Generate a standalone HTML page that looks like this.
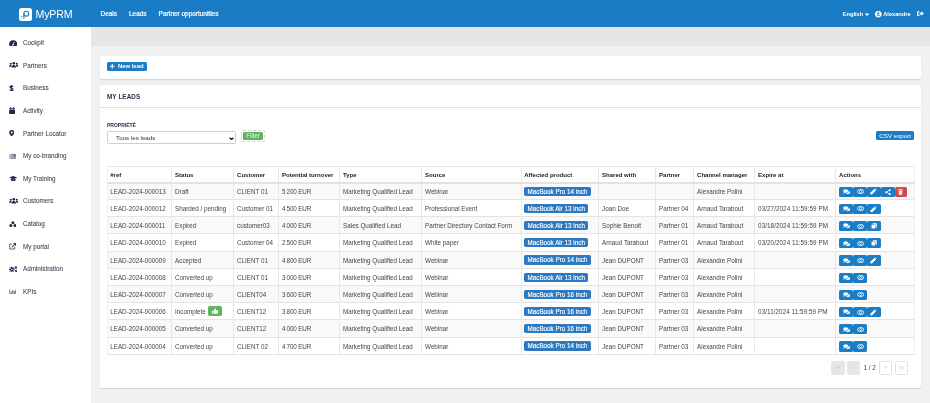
<!DOCTYPE html>
<html><head><meta charset="utf-8">
<style>
*{box-sizing:border-box;margin:0;padding:0}
html,body{width:930px;height:403px;overflow:hidden}
body{background:#f1f1f1;font-family:"Liberation Sans",sans-serif;position:relative}
#wrap{position:absolute;left:0;top:0;width:930px;height:403px;will-change:transform}
#hdr{position:absolute;left:0;top:0;width:930px;height:27px;background:#1a7cc5}
#logo{position:absolute;left:19px;top:8px;width:13px;height:13px;background:#fff;border-radius:2.5px}
#brand{position:absolute;left:35.6px;top:7.2px;font-size:10.6px;line-height:14px;color:#fff;letter-spacing:-0.2px}
.nav{position:absolute;top:10.2px;font-size:6.45px;line-height:7px;color:#fff;-webkit-text-stroke:0.2px #fff}
#side{position:absolute;left:0;top:27px;width:91px;height:376px;background:#fff}
.si{position:absolute;left:0;height:10px;width:91px}
.sic{position:absolute;left:8.5px;top:0;line-height:0}
.sic svg{display:block}
.stx{position:absolute;left:23px;top:1.3px;font-size:6.3px;line-height:8px;color:#424857;white-space:nowrap;-webkit-text-stroke:0.08px #424857}
#band{position:absolute;left:91px;top:27px;width:839px;height:19px;background:#e6e6e6}
.panel{position:absolute;left:100px;width:821px;background:#fff;border-radius:2px;box-shadow:0 0.5px 1px rgba(0,0,0,0.12)}
#p1{top:55.5px;height:23.5px}
#p2{top:85px;height:303px}
.btnb{position:absolute;background:#1a7dc6;color:#fff;border-radius:1.5px;font-size:5.8px;line-height:9px;white-space:nowrap}
#newlead{left:6.8px;top:6.5px;width:40.7px;height:9px;font-weight:bold;padding-left:11.2px;font-size:5.9px}
#newlead svg{position:absolute;left:3.7px;top:2.3px}
#mylead{position:absolute;left:7px;top:7.5px;font-size:6.3px;line-height:7px;font-weight:bold;color:#2a3246;letter-spacing:0.1px}
#p2line{position:absolute;left:0;top:22px;width:821px;height:1px;background:#e2e2e2}
#prop{position:absolute;left:7px;top:36.8px;font-size:5px;line-height:6px;font-weight:bold;color:#2a3246}
#sel{position:absolute;left:6.6px;top:46.3px;width:129.2px;height:13.2px;border:0.7px solid #cfcfcf;border-radius:1.5px;background:#fff}
#sel span{position:absolute;left:8.5px;top:1.8px;font-size:6.2px;line-height:7px;color:#333}
#sel svg{position:absolute;left:121.7px;top:4.9px}
#filter{position:absolute;left:141px;top:44.5px;width:23.5px;height:12px;border:0.6px dashed #d2d2d2;border-radius:2px}
#filter span{position:absolute;left:0.8px;top:1px;width:20.7px;height:8.5px;background:#5fb35f;color:#e4f2e4;font-size:6.3px;line-height:8.5px;text-align:center;border-radius:1.5px}
#csv{position:absolute;left:775.8px;top:46px;width:38.7px;height:9px;background:#1a7dc6;color:#fff;border-radius:1.5px;font-size:6.2px;line-height:9px;text-align:center}
#tbl{position:absolute;background:#fff}
#tblb{position:absolute;left:0;top:0;right:0;bottom:0;border:0.7px solid #f0f0f0;border-bottom-color:#e2e2e2;border-top-color:#e8e8e8}
.thead{position:absolute;left:0;top:0;width:100%}
.th{position:absolute;top:0;height:100%;padding-left:3.7px;font-size:6px;line-height:18.2px;font-weight:bold;color:#222;white-space:nowrap}
.tr{position:absolute;left:0;width:100%;border-bottom:0.7px solid #e4e4e4}
.tr.odd{background:#f9f9f9}
.td{position:absolute;top:0;height:100%;padding-left:3.7px;font-size:6.28px;line-height:18.4px;color:#40444e;white-space:nowrap}
.vl{position:absolute;top:0;bottom:0;width:0.7px;background:#e8e8e8}
.badge{position:absolute;left:3.5px;top:3.8px;background:#2d79bf;color:#fff;height:9.3px;line-height:9.3px;padding:0 3.4px;border-radius:1.8px;font-size:6.3px;-webkit-text-stroke:0.12px #fff}
.grp{position:absolute;left:3.8px;top:3.9px;display:flex;height:10.2px}
.ab{display:flex;width:13.85px;height:10.2px;background:#1a7dc6;align-items:center;justify-content:center;border-radius:1.6px}
.ab.del{background:#cd4c4a;width:11.2px;margin-left:0.8px}
.ab svg{display:block}
.thumb{position:absolute;left:36.8px;top:3.3px;display:flex;width:13.7px;height:9.4px;background:#5db65d;border-radius:1.8px;align-items:center;justify-content:center}
.pg{position:absolute;width:13.4px;height:13.4px;border:0.6px solid #e2e2e2;border-radius:1.5px;background:#fff;font-size:8px;line-height:11.6px;text-align:center;color:#c4c4c4}
.pg.dis{background:#e6e6e6;border-color:#e6e6e6;color:#c8c8c8}
#pgtxt{position:absolute;left:863.6px;top:364px;font-size:6.3px;line-height:8px;color:#444}
#rt{position:absolute;top:0;left:0}
.rtx{position:absolute;top:11px;font-size:5.7px;line-height:7px;color:#fff;white-space:nowrap;font-weight:bold}
</style></head><body><div id="wrap">
<div id="hdr">
  <div id="logo"><svg viewBox="0 0 26 26" width="13" height="13" style="display:block"><circle cx="14.6" cy="11.4" r="4.9" stroke="#1a7cc5" stroke-width="2.3" fill="none"/><path d="M9.8 11.4V21.5" stroke="#1a7cc5" stroke-width="2.3" fill="none"/><circle cx="5.6" cy="17.4" r="1.3" fill="#1a7cc5"/></svg></div>
  <div id="brand">MyPRM</div>
  <div class="nav" style="left:100.5px">Deals</div>
  <div class="nav" style="left:129px">Leads</div>
  <div class="nav" style="left:158.6px">Partner opportunities</div>
  <div class="rtx" style="left:842.7px">English</div>
  <svg style="position:absolute;left:865.3px;top:13px" width="4" height="2.6" viewBox="0 0 8 5"><path d="M1 1l3 3 3-3" stroke="#fff" stroke-width="2.4" fill="none"/></svg>
  <svg style="position:absolute;left:875px;top:11.2px" width="6.6" height="6.6" viewBox="0 0 12 12"><circle cx="6" cy="6" r="6" fill="#fff"/><circle cx="6" cy="4.5" r="2" fill="#1a7cc5"/><path d="M2.3 9.8c0.8-1.6 2.1-2.4 3.7-2.4s2.9 0.8 3.7 2.4" stroke="#1a7cc5" stroke-width="1.6" fill="none"/></svg>
  <div class="rtx" style="left:883.2px">Alexandre</div>
  <svg style="position:absolute;left:917.2px;top:11.3px" width="7" height="5.1" viewBox="0 0 14 10"><path d="M4.5 1.3H2.6C1.6 1.3 1.2 1.8 1.2 2.8v4.4c0 1 0.4 1.5 1.4 1.5h1.9" stroke="#fff" stroke-width="2.4" fill="none"/><path d="M5.2 3.2h3.6V0.6L13.8 5l-5 4.4V6.8H5.2z" fill="#fff"/></svg>
</div>
<div id="side"><div class="si" style="top:10.65px"><span class="sic" style="top:1.97px"><svg viewBox="0 0 15 11" width="8.4" height="6.16"><path d="M7.5 0.3A7.2 7.2 0 0 0 0.3 7.5c0 1.3 0.3 2.4 0.9 3.3h12.6c0.6-0.9 0.9-2 0.9-3.3A7.2 7.2 0 0 0 7.5 0.3z" fill="#1e2b48"/><path d="M7 9L9.6 3.2" stroke="#fff" stroke-width="1.5"/><circle cx="7" cy="9" r="1.3" fill="#fff"/></svg></span><span class="stx">Cockpit</span></div><div class="si" style="top:33.3px"><span class="sic" style="top:2.2px"><svg viewBox="0 0 17 10" width="9.52" height="5.6"><circle cx="8.5" cy="2.4" r="2.4" fill="#1e2b48"/><circle cx="3" cy="3.2" r="1.8" fill="#1e2b48"/><circle cx="14" cy="3.2" r="1.8" fill="#1e2b48"/><path d="M4.3 10c0-2.7 1.9-4.5 4.2-4.5s4.2 1.8 4.2 4.5z" fill="#1e2b48"/><path d="M0 8.3C0 6.6 1.2 5.5 2.8 5.5c0.9 0 1.6 0.3 2 0.7C4 7 3.6 7.8 3.5 8.3z" fill="#1e2b48"/><path d="M17 8.3c0-1.7-1.2-2.8-2.8-2.8-0.9 0-1.6 0.3-2 0.7 0.8 0.8 1.2 1.6 1.3 2.1z" fill="#1e2b48"/></svg></span><span class="stx">Partners</span></div><div class="si" style="top:55.95px"><span class="sic" style="top:1.64px"><svg viewBox="0 0 9 12" width="5.04" height="6.72"><path d="M7.3 3.3C7 2.4 6 2 4.5 2S1.6 2.6 1.6 3.7s1.3 1.6 2.9 2 3 0.9 3 2.2-1.3 2-3 2-2.8-0.5-3.1-1.5M4.5 0.2v11.6" stroke="#1e2b48" stroke-width="1.9" fill="none"/></svg></span><span class="stx">Business</span></div><div class="si" style="top:78.6px"><span class="sic" style="top:1.62px"><svg viewBox="0 0 12 13" width="6.38" height="7.06"><rect x="0.3" y="2" width="11.4" height="11" rx="1" fill="#1e2b48"/><rect x="2.3" y="0" width="1.8" height="3" fill="#1e2b48"/><rect x="7.9" y="0" width="1.8" height="3" fill="#1e2b48"/><rect x="0.3" y="4.6" width="11.4" height="0.9" fill="#fff"/></svg></span><span class="stx">Activity</span></div><div class="si" style="top:101.25px"><span class="sic" style="top:1.65px"><svg viewBox="0 0 10 12" width="5.49" height="6.5"><path d="M5 0.2A4.8 4.8 0 0 0 0.2 5C0.2 7.8 5 11.8 5 11.8S9.8 7.8 9.8 5A4.8 4.8 0 0 0 5 0.2z" fill="#1e2b48"/><circle cx="5" cy="4.8" r="1.9" fill="#fff"/></svg></span><span class="stx">Partner Locator</span></div><div class="si" style="top:123.9px"><span class="sic" style="top:1.64px"><svg viewBox="0 0 14 12" width="7.84" height="6.72"><path d="M2.5 1.5h11v9h-11z" fill="#7d8596"/><path d="M0.5 3v8.5h11" stroke="#7d8596" stroke-width="1.2" fill="none"/><rect x="4" y="3" width="8" height="6" fill="#aab0bb"/><rect x="8.5" y="4" width="2.5" height="3" fill="#3a4458"/></svg></span><span class="stx">My co-branding</span></div><div class="si" style="top:146.55px"><span class="sic" style="top:2.43px"><svg viewBox="0 0 15 9" width="8.4" height="5.04"><path d="M7.5 0L15 2.8 7.5 5.6 0 2.8z" fill="#1e2b48"/><path d="M3.3 4.5v2.5c0 1 1.9 2 4.2 2s4.2-1 4.2-2V4.5L7.5 6.3z" fill="#1e2b48"/></svg></span><span class="stx">My Training</span></div><div class="si" style="top:169.2px"><span class="sic" style="top:2.2px"><svg viewBox="0 0 17 10" width="9.52" height="5.6"><circle cx="8.5" cy="2.4" r="2.4" fill="#1e2b48"/><circle cx="3" cy="3.2" r="1.8" fill="#1e2b48"/><circle cx="14" cy="3.2" r="1.8" fill="#1e2b48"/><path d="M4.3 10c0-2.7 1.9-4.5 4.2-4.5s4.2 1.8 4.2 4.5z" fill="#1e2b48"/><path d="M0 8.3C0 6.6 1.2 5.5 2.8 5.5c0.9 0 1.6 0.3 2 0.7C4 7 3.6 7.8 3.5 8.3z" fill="#1e2b48"/><path d="M17 8.3c0-1.7-1.2-2.8-2.8-2.8-0.9 0-1.6 0.3-2 0.7 0.8 0.8 1.2 1.6 1.3 2.1z" fill="#1e2b48"/></svg></span><span class="stx">Customers</span></div><div class="si" style="top:191.85px"><span class="sic" style="top:1.87px"><svg viewBox="0 0 14 11" width="7.84" height="6.16"><circle cx="7" cy="3" r="2.7" fill="#1e2b48"/><circle cx="3.3" cy="8" r="2.7" fill="#1e2b48"/><circle cx="10.7" cy="8" r="2.7" fill="#1e2b48"/><circle cx="7" cy="6.3" r="1" fill="#fff"/></svg></span><span class="stx">Catalog</span></div><div class="si" style="top:214.5px"><span class="sic" style="top:1.64px"><svg viewBox="0 0 13 12" width="7.28" height="6.72"><path d="M5 1.8H1.3v9h9V7" stroke="#4a5468" stroke-width="1.6" fill="none"/><path d="M7 0.3h5.4v5.2z" fill="#1e2b48"/><path d="M11.5 1.2L5 7.6" stroke="#1e2b48" stroke-width="1.8"/></svg></span><span class="stx">My portal</span></div><div class="si" style="top:237.15px"><span class="sic" style="top:1.66px"><svg viewBox="0 0 16 11" width="8.96" height="6.27"><circle cx="5" cy="6" r="3.9" fill="none" stroke="#1e2b48" stroke-width="2.4" stroke-dasharray="1.6 0.9"/><circle cx="5" cy="6" r="3" fill="#1e2b48"/><circle cx="5" cy="6" r="1.2" fill="#fff"/><circle cx="12.5" cy="2.6" r="2.3" fill="#1e2b48"/><circle cx="12.5" cy="2.6" r="0.8" fill="#fff"/><circle cx="12.5" cy="8.6" r="2" fill="#1e2b48"/><circle cx="12.5" cy="8.6" r="0.7" fill="#fff"/></svg></span><span class="stx">Administration</span></div><div class="si" style="top:259.8px"><span class="sic" style="top:2.43px"><svg viewBox="0 0 13 9" width="7.28" height="5.04"><path d="M0.7 0v8.3H13" stroke="#6b7486" stroke-width="1.3" fill="none"/><rect x="2.7" y="4" width="2" height="3.8" fill="#6b7486"/><rect x="5.7" y="2" width="2" height="5.8" fill="#6b7486"/><rect x="8.7" y="3.5" width="2" height="4.3" fill="#6b7486"/><rect x="11.2" y="1.2" width="1.6" height="6.6" fill="#6b7486"/></svg></span><span class="stx">KPIs</span></div></div>
<div id="band"></div>
<div class="panel" id="p1">
  <div class="btnb" id="newlead"><svg width="4.6" height="4.6" viewBox="0 0 10 10"><path d="M5 0v10M0 5h10" stroke="#fff" stroke-width="2.2"/></svg>New lead</div>
</div>
<div class="panel" id="p2">
  <div id="mylead">MY LEADS</div>
  <div id="p2line"></div>
  <div id="prop">PROPRIÉTÉ</div>
  <div id="sel"><span>Tous les leads</span><svg width="5" height="3.2" viewBox="0 0 8 5"><path d="M1 1l3 3 3-3" stroke="#1e2b48" stroke-width="2.3" fill="none"/></svg></div>
  <div id="filter"><span>Filter</span></div>
  <div id="csv">CSV export</div>
</div>
<div id="tbl" style="left:106.6px;top:166.1px;width:808px;height:188.7px"><div class="thead" style="height:16.7px"><div class="th" style="left:0px;width:64.8px">#ref</div><div class="th" style="left:64.8px;width:62px">Status</div><div class="th" style="left:126.8px;width:45px">Customer</div><div class="th" style="left:171.8px;width:61px">Potential turnover</div><div class="th" style="left:232.8px;width:82px">Type</div><div class="th" style="left:314.8px;width:99.2px">Source</div><div class="th" style="left:414px;width:77.8px">Affected product</div><div class="th" style="left:491.8px;width:57px">Shared with</div><div class="th" style="left:548.8px;width:38px">Partner</div><div class="th" style="left:586.8px;width:61px">Channel manager</div><div class="th" style="left:647.8px;width:81px">Expire at</div><div class="th" style="left:728.8px;width:79.2px">Actions</div></div><div class="tr odd" style="top:16.7px;height:17.2px"><div class="td" style="left:0px;width:64.8px">LEAD-2024-000013</div><div class="td" style="left:64.8px;width:62px">Draft</div><div class="td" style="left:126.8px;width:45px">CLIENT 01</div><div class="td" style="left:171.8px;width:61px"><span style="letter-spacing:-0.12px">5 200 EUR</span></div><div class="td" style="left:232.8px;width:82px">Marketing Qualified Lead</div><div class="td" style="left:314.8px;width:99.2px">Webinar</div><div class="td" style="left:414px;width:77.8px"><span class="badge">MacBook Pro 14 inch</span></div><div class="td" style="left:491.8px;width:57px"></div><div class="td" style="left:548.8px;width:38px"></div><div class="td" style="left:586.8px;width:61px">Alexandre Polini</div><div class="td" style="left:647.8px;width:81px"></div><div class="td" style="left:728.8px;width:79.2px"><span class="grp"><span class="ab"><svg viewBox="0 0 16 12" width="7.2" height="5.4"><ellipse cx="10.6" cy="7.4" rx="5" ry="3.8" fill="#fff"/><path d="M13.5 9.5l2.4 2.4-4.8-0.8z" fill="#fff"/><ellipse cx="6" cy="4.6" rx="6.4" ry="4.6" fill="#1a7dc6"/><ellipse cx="6" cy="4.6" rx="5.5" ry="3.9" fill="#fff"/><path d="M2 7.4L0.6 10.8 5.5 8.3z" fill="#fff"/></svg></span><span class="ab"><svg viewBox="0 0 16 11" width="7.3" height="5.1" style="margin-left:1px"><ellipse cx="8" cy="5.5" rx="6.8" ry="4.4" fill="none" stroke="#fff" stroke-width="1.9"/><circle cx="8" cy="5.5" r="2.2" fill="none" stroke="#fff" stroke-width="1.5"/></svg></span><span class="ab"><svg viewBox="0 0 12 12" width="6.8" height="6.8"><path d="M0.5 11.5l0.6-3.4L8 1.2l2.8 2.8-6.9 6.9z" fill="#fff"/><path d="M8.8 0.5l0.7-0.4 2.4 2.4-0.4 0.7z" fill="#fff"/></svg></span><span class="ab"><svg viewBox="0 0 12 12" width="6" height="6.4"><path d="M9.3 2.2L2.7 6l6.6 3.8" stroke="#fff" stroke-width="1.4" fill="none"/><circle cx="9.3" cy="2.2" r="2.1" fill="#fff"/><circle cx="2.5" cy="6" r="2.1" fill="#fff"/><circle cx="9.3" cy="9.8" r="2.1" fill="#fff"/></svg></span><span class="ab del"><svg viewBox="0 0 10 12" width="5" height="6"><rect x="0.3" y="1" width="9.4" height="1.6" fill="#fff"/><rect x="3.3" y="0" width="3.4" height="1.5" fill="#fff"/><path d="M1.2 3.3h7.6l-0.6 8.4H1.8z" fill="#fff"/><path d="M3.3 4.5v6M5 4.5v6M6.7 4.5v6" stroke="#e0a09e" stroke-width="0.6"/></svg></span></span></div></div><div class="tr" style="top:33.9px;height:17.2px"><div class="td" style="left:0px;width:64.8px">LEAD-2024-000012</div><div class="td" style="left:64.8px;width:62px">Sharded / pending</div><div class="td" style="left:126.8px;width:45px">Customer 01</div><div class="td" style="left:171.8px;width:61px"><span style="letter-spacing:-0.12px">4 500 EUR</span></div><div class="td" style="left:232.8px;width:82px">Marketing Qualified Lead</div><div class="td" style="left:314.8px;width:99.2px">Professional Event</div><div class="td" style="left:414px;width:77.8px"><span class="badge">MacBook Air 13 inch</span></div><div class="td" style="left:491.8px;width:57px">Joan Doe</div><div class="td" style="left:548.8px;width:38px">Partner 04</div><div class="td" style="left:586.8px;width:61px">Arnaud Tarabout</div><div class="td" style="left:647.8px;width:81px"><span style="letter-spacing:0.08px">03/27/2024 11:59:59 PM</span></div><div class="td" style="left:728.8px;width:79.2px"><span class="grp"><span class="ab"><svg viewBox="0 0 16 12" width="7.2" height="5.4"><ellipse cx="10.6" cy="7.4" rx="5" ry="3.8" fill="#fff"/><path d="M13.5 9.5l2.4 2.4-4.8-0.8z" fill="#fff"/><ellipse cx="6" cy="4.6" rx="6.4" ry="4.6" fill="#1a7dc6"/><ellipse cx="6" cy="4.6" rx="5.5" ry="3.9" fill="#fff"/><path d="M2 7.4L0.6 10.8 5.5 8.3z" fill="#fff"/></svg></span><span class="ab"><svg viewBox="0 0 16 11" width="7.3" height="5.1" style="margin-left:1px"><ellipse cx="8" cy="5.5" rx="6.8" ry="4.4" fill="none" stroke="#fff" stroke-width="1.9"/><circle cx="8" cy="5.5" r="2.2" fill="none" stroke="#fff" stroke-width="1.5"/></svg></span><span class="ab"><svg viewBox="0 0 12 12" width="6.8" height="6.8"><path d="M0.5 11.5l0.6-3.4L8 1.2l2.8 2.8-6.9 6.9z" fill="#fff"/><path d="M8.8 0.5l0.7-0.4 2.4 2.4-0.4 0.7z" fill="#fff"/></svg></span></span></div></div><div class="tr odd" style="top:51.1px;height:17.2px"><div class="td" style="left:0px;width:64.8px">LEAD-2024-000011</div><div class="td" style="left:64.8px;width:62px">Expired</div><div class="td" style="left:126.8px;width:45px">customer03</div><div class="td" style="left:171.8px;width:61px"><span style="letter-spacing:-0.12px">4 000 EUR</span></div><div class="td" style="left:232.8px;width:82px">Sales Qualified Lead</div><div class="td" style="left:314.8px;width:99.2px">Partner Directory Contact Form</div><div class="td" style="left:414px;width:77.8px"><span class="badge">MacBook Air 13 inch</span></div><div class="td" style="left:491.8px;width:57px">Sophie Benoit</div><div class="td" style="left:548.8px;width:38px">Partner 01</div><div class="td" style="left:586.8px;width:61px">Arnaud Tarabout</div><div class="td" style="left:647.8px;width:81px"><span style="letter-spacing:0.08px">03/18/2024 11:59:59 PM</span></div><div class="td" style="left:728.8px;width:79.2px"><span class="grp"><span class="ab"><svg viewBox="0 0 16 12" width="7.2" height="5.4"><ellipse cx="10.6" cy="7.4" rx="5" ry="3.8" fill="#fff"/><path d="M13.5 9.5l2.4 2.4-4.8-0.8z" fill="#fff"/><ellipse cx="6" cy="4.6" rx="6.4" ry="4.6" fill="#1a7dc6"/><ellipse cx="6" cy="4.6" rx="5.5" ry="3.9" fill="#fff"/><path d="M2 7.4L0.6 10.8 5.5 8.3z" fill="#fff"/></svg></span><span class="ab"><svg viewBox="0 0 16 11" width="7.3" height="5.1" style="margin-left:1px"><ellipse cx="8" cy="5.5" rx="6.8" ry="4.4" fill="none" stroke="#fff" stroke-width="1.9"/><circle cx="8" cy="5.5" r="2.2" fill="none" stroke="#fff" stroke-width="1.5"/></svg></span><span class="ab"><svg viewBox="0 0 12 12" width="6" height="6"><rect x="3.5" y="0.5" width="8" height="8.5" rx="0.6" fill="#fff"/><rect x="0.5" y="3" width="8" height="8.5" rx="0.6" fill="#fff" stroke="#1a7dc6" stroke-width="1"/></svg></span></span></div></div><div class="tr" style="top:68.3px;height:17.2px"><div class="td" style="left:0px;width:64.8px">LEAD-2024-000010</div><div class="td" style="left:64.8px;width:62px">Expired</div><div class="td" style="left:126.8px;width:45px">Customer 04</div><div class="td" style="left:171.8px;width:61px"><span style="letter-spacing:-0.12px">2 500 EUR</span></div><div class="td" style="left:232.8px;width:82px">Marketing Qualified Lead</div><div class="td" style="left:314.8px;width:99.2px">White paper</div><div class="td" style="left:414px;width:77.8px"><span class="badge">MacBook Air 13 inch</span></div><div class="td" style="left:491.8px;width:57px">Arnaud Tarabout</div><div class="td" style="left:548.8px;width:38px">Partner 01</div><div class="td" style="left:586.8px;width:61px">Arnaud Tarabout</div><div class="td" style="left:647.8px;width:81px"><span style="letter-spacing:0.08px">03/20/2024 11:59:59 PM</span></div><div class="td" style="left:728.8px;width:79.2px"><span class="grp"><span class="ab"><svg viewBox="0 0 16 12" width="7.2" height="5.4"><ellipse cx="10.6" cy="7.4" rx="5" ry="3.8" fill="#fff"/><path d="M13.5 9.5l2.4 2.4-4.8-0.8z" fill="#fff"/><ellipse cx="6" cy="4.6" rx="6.4" ry="4.6" fill="#1a7dc6"/><ellipse cx="6" cy="4.6" rx="5.5" ry="3.9" fill="#fff"/><path d="M2 7.4L0.6 10.8 5.5 8.3z" fill="#fff"/></svg></span><span class="ab"><svg viewBox="0 0 16 11" width="7.3" height="5.1" style="margin-left:1px"><ellipse cx="8" cy="5.5" rx="6.8" ry="4.4" fill="none" stroke="#fff" stroke-width="1.9"/><circle cx="8" cy="5.5" r="2.2" fill="none" stroke="#fff" stroke-width="1.5"/></svg></span><span class="ab"><svg viewBox="0 0 12 12" width="6" height="6"><rect x="3.5" y="0.5" width="8" height="8.5" rx="0.6" fill="#fff"/><rect x="0.5" y="3" width="8" height="8.5" rx="0.6" fill="#fff" stroke="#1a7dc6" stroke-width="1"/></svg></span></span></div></div><div class="tr odd" style="top:85.5px;height:17.2px"><div class="td" style="left:0px;width:64.8px">LEAD-2024-000009</div><div class="td" style="left:64.8px;width:62px">Accepted</div><div class="td" style="left:126.8px;width:45px">CLIENT 01</div><div class="td" style="left:171.8px;width:61px"><span style="letter-spacing:-0.12px">4 800 EUR</span></div><div class="td" style="left:232.8px;width:82px">Marketing Qualified Lead</div><div class="td" style="left:314.8px;width:99.2px">Webinar</div><div class="td" style="left:414px;width:77.8px"><span class="badge">MacBook Pro 14 inch</span></div><div class="td" style="left:491.8px;width:57px">Jean DUPONT</div><div class="td" style="left:548.8px;width:38px">Partner 03</div><div class="td" style="left:586.8px;width:61px">Alexandre Polini</div><div class="td" style="left:647.8px;width:81px"></div><div class="td" style="left:728.8px;width:79.2px"><span class="grp"><span class="ab"><svg viewBox="0 0 16 12" width="7.2" height="5.4"><ellipse cx="10.6" cy="7.4" rx="5" ry="3.8" fill="#fff"/><path d="M13.5 9.5l2.4 2.4-4.8-0.8z" fill="#fff"/><ellipse cx="6" cy="4.6" rx="6.4" ry="4.6" fill="#1a7dc6"/><ellipse cx="6" cy="4.6" rx="5.5" ry="3.9" fill="#fff"/><path d="M2 7.4L0.6 10.8 5.5 8.3z" fill="#fff"/></svg></span><span class="ab"><svg viewBox="0 0 16 11" width="7.3" height="5.1" style="margin-left:1px"><ellipse cx="8" cy="5.5" rx="6.8" ry="4.4" fill="none" stroke="#fff" stroke-width="1.9"/><circle cx="8" cy="5.5" r="2.2" fill="none" stroke="#fff" stroke-width="1.5"/></svg></span><span class="ab"><svg viewBox="0 0 12 12" width="6.8" height="6.8"><path d="M0.5 11.5l0.6-3.4L8 1.2l2.8 2.8-6.9 6.9z" fill="#fff"/><path d="M8.8 0.5l0.7-0.4 2.4 2.4-0.4 0.7z" fill="#fff"/></svg></span></span></div></div><div class="tr" style="top:102.7px;height:17.2px"><div class="td" style="left:0px;width:64.8px">LEAD-2024-000008</div><div class="td" style="left:64.8px;width:62px">Converted up</div><div class="td" style="left:126.8px;width:45px">CLIENT 01</div><div class="td" style="left:171.8px;width:61px"><span style="letter-spacing:-0.12px">3 000 EUR</span></div><div class="td" style="left:232.8px;width:82px">Marketing Qualified Lead</div><div class="td" style="left:314.8px;width:99.2px">Webinar</div><div class="td" style="left:414px;width:77.8px"><span class="badge">MacBook Air 13 inch</span></div><div class="td" style="left:491.8px;width:57px">Jean DUPONT</div><div class="td" style="left:548.8px;width:38px">Partner 03</div><div class="td" style="left:586.8px;width:61px">Alexandre Polini</div><div class="td" style="left:647.8px;width:81px"></div><div class="td" style="left:728.8px;width:79.2px"><span class="grp"><span class="ab"><svg viewBox="0 0 16 12" width="7.2" height="5.4"><ellipse cx="10.6" cy="7.4" rx="5" ry="3.8" fill="#fff"/><path d="M13.5 9.5l2.4 2.4-4.8-0.8z" fill="#fff"/><ellipse cx="6" cy="4.6" rx="6.4" ry="4.6" fill="#1a7dc6"/><ellipse cx="6" cy="4.6" rx="5.5" ry="3.9" fill="#fff"/><path d="M2 7.4L0.6 10.8 5.5 8.3z" fill="#fff"/></svg></span><span class="ab"><svg viewBox="0 0 16 11" width="7.3" height="5.1" style="margin-left:1px"><ellipse cx="8" cy="5.5" rx="6.8" ry="4.4" fill="none" stroke="#fff" stroke-width="1.9"/><circle cx="8" cy="5.5" r="2.2" fill="none" stroke="#fff" stroke-width="1.5"/></svg></span></span></div></div><div class="tr odd" style="top:119.9px;height:17.2px"><div class="td" style="left:0px;width:64.8px">LEAD-2024-000007</div><div class="td" style="left:64.8px;width:62px">Converted up</div><div class="td" style="left:126.8px;width:45px">CLIENT04</div><div class="td" style="left:171.8px;width:61px"><span style="letter-spacing:-0.12px">3 600 EUR</span></div><div class="td" style="left:232.8px;width:82px">Marketing Qualified Lead</div><div class="td" style="left:314.8px;width:99.2px">Webinar</div><div class="td" style="left:414px;width:77.8px"><span class="badge">MacBook Pro 16 inch</span></div><div class="td" style="left:491.8px;width:57px">Jean DUPONT</div><div class="td" style="left:548.8px;width:38px">Partner 03</div><div class="td" style="left:586.8px;width:61px">Alexandre Polini</div><div class="td" style="left:647.8px;width:81px"></div><div class="td" style="left:728.8px;width:79.2px"><span class="grp"><span class="ab"><svg viewBox="0 0 16 12" width="7.2" height="5.4"><ellipse cx="10.6" cy="7.4" rx="5" ry="3.8" fill="#fff"/><path d="M13.5 9.5l2.4 2.4-4.8-0.8z" fill="#fff"/><ellipse cx="6" cy="4.6" rx="6.4" ry="4.6" fill="#1a7dc6"/><ellipse cx="6" cy="4.6" rx="5.5" ry="3.9" fill="#fff"/><path d="M2 7.4L0.6 10.8 5.5 8.3z" fill="#fff"/></svg></span><span class="ab"><svg viewBox="0 0 16 11" width="7.3" height="5.1" style="margin-left:1px"><ellipse cx="8" cy="5.5" rx="6.8" ry="4.4" fill="none" stroke="#fff" stroke-width="1.9"/><circle cx="8" cy="5.5" r="2.2" fill="none" stroke="#fff" stroke-width="1.5"/></svg></span></span></div></div><div class="tr" style="top:137.1px;height:17.2px"><div class="td" style="left:0px;width:64.8px">LEAD-2024-000006</div><div class="td" style="left:64.8px;width:62px">Incomplete <span class="thumb"><svg viewBox="0 0 12 11" width="6.2" height="5.7"><rect x="0" y="5" width="2.4" height="6" fill="#fff"/><path d="M3.3 5.2L6 0.3c1.1 0 1.7 0.7 1.5 1.9L7.1 4.3h3.9c0.7 0 1.1 0.5 1 1.2l-0.9 4.6c-0.1 0.5-0.5 0.9-1.1 0.9H3.3z" fill="#fff"/></svg></span></div><div class="td" style="left:126.8px;width:45px">CLIENT12</div><div class="td" style="left:171.8px;width:61px"><span style="letter-spacing:-0.12px">3 800 EUR</span></div><div class="td" style="left:232.8px;width:82px">Marketing Qualified Lead</div><div class="td" style="left:314.8px;width:99.2px">Webinar</div><div class="td" style="left:414px;width:77.8px"><span class="badge">MacBook Pro 16 inch</span></div><div class="td" style="left:491.8px;width:57px">Jean DUPONT</div><div class="td" style="left:548.8px;width:38px">Partner 03</div><div class="td" style="left:586.8px;width:61px">Alexandre Polini</div><div class="td" style="left:647.8px;width:81px"><span style="letter-spacing:0.08px">03/11/2024 11:59:59 PM</span></div><div class="td" style="left:728.8px;width:79.2px"><span class="grp"><span class="ab"><svg viewBox="0 0 16 12" width="7.2" height="5.4"><ellipse cx="10.6" cy="7.4" rx="5" ry="3.8" fill="#fff"/><path d="M13.5 9.5l2.4 2.4-4.8-0.8z" fill="#fff"/><ellipse cx="6" cy="4.6" rx="6.4" ry="4.6" fill="#1a7dc6"/><ellipse cx="6" cy="4.6" rx="5.5" ry="3.9" fill="#fff"/><path d="M2 7.4L0.6 10.8 5.5 8.3z" fill="#fff"/></svg></span><span class="ab"><svg viewBox="0 0 16 11" width="7.3" height="5.1" style="margin-left:1px"><ellipse cx="8" cy="5.5" rx="6.8" ry="4.4" fill="none" stroke="#fff" stroke-width="1.9"/><circle cx="8" cy="5.5" r="2.2" fill="none" stroke="#fff" stroke-width="1.5"/></svg></span><span class="ab"><svg viewBox="0 0 12 12" width="6.8" height="6.8"><path d="M0.5 11.5l0.6-3.4L8 1.2l2.8 2.8-6.9 6.9z" fill="#fff"/><path d="M8.8 0.5l0.7-0.4 2.4 2.4-0.4 0.7z" fill="#fff"/></svg></span></span></div></div><div class="tr odd" style="top:154.3px;height:17.2px"><div class="td" style="left:0px;width:64.8px">LEAD-2024-000005</div><div class="td" style="left:64.8px;width:62px">Converted up</div><div class="td" style="left:126.8px;width:45px">CLIENT12</div><div class="td" style="left:171.8px;width:61px"><span style="letter-spacing:-0.12px">4 000 EUR</span></div><div class="td" style="left:232.8px;width:82px">Marketing Qualified Lead</div><div class="td" style="left:314.8px;width:99.2px">Webinar</div><div class="td" style="left:414px;width:77.8px"><span class="badge">MacBook Pro 16 inch</span></div><div class="td" style="left:491.8px;width:57px">Jean DUPONT</div><div class="td" style="left:548.8px;width:38px">Partner 03</div><div class="td" style="left:586.8px;width:61px">Alexandre Polini</div><div class="td" style="left:647.8px;width:81px"></div><div class="td" style="left:728.8px;width:79.2px"><span class="grp"><span class="ab"><svg viewBox="0 0 16 12" width="7.2" height="5.4"><ellipse cx="10.6" cy="7.4" rx="5" ry="3.8" fill="#fff"/><path d="M13.5 9.5l2.4 2.4-4.8-0.8z" fill="#fff"/><ellipse cx="6" cy="4.6" rx="6.4" ry="4.6" fill="#1a7dc6"/><ellipse cx="6" cy="4.6" rx="5.5" ry="3.9" fill="#fff"/><path d="M2 7.4L0.6 10.8 5.5 8.3z" fill="#fff"/></svg></span><span class="ab"><svg viewBox="0 0 16 11" width="7.3" height="5.1" style="margin-left:1px"><ellipse cx="8" cy="5.5" rx="6.8" ry="4.4" fill="none" stroke="#fff" stroke-width="1.9"/><circle cx="8" cy="5.5" r="2.2" fill="none" stroke="#fff" stroke-width="1.5"/></svg></span></span></div></div><div class="tr" style="top:171.5px;height:17.2px"><div class="td" style="left:0px;width:64.8px">LEAD-2024-000004</div><div class="td" style="left:64.8px;width:62px">Converted up</div><div class="td" style="left:126.8px;width:45px">CLIENT 02</div><div class="td" style="left:171.8px;width:61px"><span style="letter-spacing:-0.12px">4 700 EUR</span></div><div class="td" style="left:232.8px;width:82px">Marketing Qualified Lead</div><div class="td" style="left:314.8px;width:99.2px">Webinar</div><div class="td" style="left:414px;width:77.8px"><span class="badge">MacBook Pro 14 inch</span></div><div class="td" style="left:491.8px;width:57px">Jean DUPONT</div><div class="td" style="left:548.8px;width:38px">Partner 03</div><div class="td" style="left:586.8px;width:61px">Alexandre Polini</div><div class="td" style="left:647.8px;width:81px"></div><div class="td" style="left:728.8px;width:79.2px"><span class="grp"><span class="ab"><svg viewBox="0 0 16 12" width="7.2" height="5.4"><ellipse cx="10.6" cy="7.4" rx="5" ry="3.8" fill="#fff"/><path d="M13.5 9.5l2.4 2.4-4.8-0.8z" fill="#fff"/><ellipse cx="6" cy="4.6" rx="6.4" ry="4.6" fill="#1a7dc6"/><ellipse cx="6" cy="4.6" rx="5.5" ry="3.9" fill="#fff"/><path d="M2 7.4L0.6 10.8 5.5 8.3z" fill="#fff"/></svg></span><span class="ab"><svg viewBox="0 0 16 11" width="7.3" height="5.1" style="margin-left:1px"><ellipse cx="8" cy="5.5" rx="6.8" ry="4.4" fill="none" stroke="#fff" stroke-width="1.9"/><circle cx="8" cy="5.5" r="2.2" fill="none" stroke="#fff" stroke-width="1.5"/></svg></span></span></div></div><div class="vl" style="left:64.8px"></div><div class="vl" style="left:126.8px"></div><div class="vl" style="left:171.8px"></div><div class="vl" style="left:232.8px"></div><div class="vl" style="left:314.8px"></div><div class="vl" style="left:414px"></div><div class="vl" style="left:491.8px"></div><div class="vl" style="left:548.8px"></div><div class="vl" style="left:586.8px"></div><div class="vl" style="left:647.8px"></div><div class="vl" style="left:728.8px"></div><div id="tblb"></div><div style="position:absolute;left:0;right:0;top:15.9px;height:2px;background:#e3e3e3"></div></div>
<div class="pg dis" style="left:831.2px;top:361.2px">‹‹</div>
<div class="pg dis" style="left:847px;top:361.2px">‹</div>
<div id="pgtxt">1 / 2</div>
<div class="pg" style="left:879px;top:361.2px">›</div>
<div class="pg" style="left:894.6px;top:361.2px">››</div>
</div></body></html>
